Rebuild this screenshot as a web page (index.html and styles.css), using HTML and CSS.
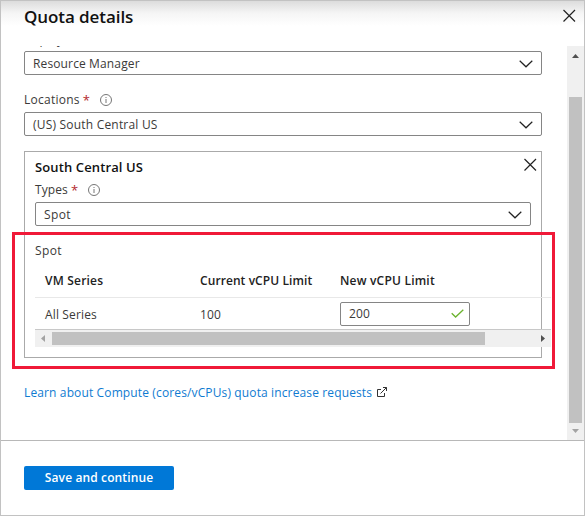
FILE: index.html
```html
<!DOCTYPE html>
<html lang="en">
<head>
<meta charset="utf-8">
<title>Quota details</title>
<link rel="stylesheet" href="styles.css">
</head>
<body>
<div class="panel">
  <header class="header">
    <h1 class="title">Quota details</h1>
    <svg class="close" width="13" height="13" viewBox="0 0 13 13"><path d="M.5 1L12 12.500M12 1L.5 12.500"/></svg>
  </header>
  <div class="body">
    <main class="content">
      <div class="label label-cut">Deployment model</div>
      <div class="select"><span class="t-resource">Resource Manager</span><svg class="chevron" width="14" height="8" viewBox="0 0 14 8"><path d="M.7.7L7 6.800 13.300.7"/></svg></div>
      <div class="label label-loc"><span class="t-loc">Locations</span><span class="req">*</span><svg class="info" width="12" height="12" viewBox="0 0 12 12"><circle cx="6" cy="6" r="5.500"/><path d="M6 5v4M6 3v1"/></svg></div>
      <div class="select"><span class="t-us">(US) South Central US</span><svg class="chevron" width="14" height="8" viewBox="0 0 14 8"><path d="M.7.7L7 6.800 13.300.7"/></svg></div>
      <section class="card">
        <div class="card-head"><h2 class="card-title">South Central US</h2><svg class="close" width="13" height="13" viewBox="0 0 13 13"><path d="M.5 1L12 12.500M12 1L.5 12.500"/></svg></div>
        <div class="label label-types"><span class="t-types">Types</span><span class="req">*</span><svg class="info" width="12" height="12" viewBox="0 0 12 12"><circle cx="6" cy="6" r="5.500"/><path d="M6 5v4M6 3v1"/></svg></div>
        <div class="select select-card"><span class="t-spot">Spot</span><svg class="chevron" width="14" height="8" viewBox="0 0 14 8"><path d="M.7.7L7 6.800 13.300.7"/></svg></div>
        <div class="spot-label"><span class="t-spot">Spot</span></div>
        <div class="table">
          <div class="row row-head"><span class="t-vm">VM Series</span><span class="t-cur">Current vCPU Limit</span><span class="t-new">New vCPU Limit</span></div>
          <div class="row row-data"><span class="t-all">All Series</span><span class="t-num">100</span>
            <div class="input"><span class="t-num">200</span><svg class="check" width="13" height="9" viewBox="0 0 13 9"><path d="M.7 4.300L4.600 8 12.300.7"/></svg></div>
          </div>
          <div class="hscroll"><svg width="17" height="17" viewBox="0 0 17 17"><path fill="#a3a3a3" d="M10 5v7L6 8.500z"/></svg><div class="hthumb"></div><svg width="17" height="17" viewBox="0 0 17 17"><path fill="#505050" d="M7 5v7l4-3.500z"/></svg></div>
        </div>
      </section>
      <a class="link"><span class="t-link">Learn about Compute (cores/vCPUs) quota increase requests</span><svg class="ext" width="10" height="10" viewBox="0 0 10 10"><path d="M4 2.500H.5v7h7V6M3.500 6.500l6-6M6 .5h3.500V4"/></svg></a>
    </main>
    <div class="vscroll"><svg width="17" height="17" viewBox="0 0 17 17"><path fill="#505050" d="M5 11h7L8.500 7z"/></svg><div class="vthumb"></div><svg width="17" height="17" viewBox="0 0 17 17"><path fill="#a3a3a3" d="M5 6h7l-3.500 4z"/></svg></div>
  </div>
  <footer class="footer"><button class="save">Save and continue</button></footer>
  <div class="highlight"></div>
</div>
</body>
</html>
```
FILE: styles.css
```css
* { box-sizing: border-box; }
body { margin: 0; background: #fff; }
.panel {
  position: relative; width: 585px; height: 516px; overflow: hidden;
  display: flex; flex-direction: column; border: 1px solid #c2c2c2;
  font: 12px/18px "Open Sans", "Noto Sans", sans-serif; color: #3b3a39;
  white-space: nowrap;
}
svg { display: block; flex: none; }
.header {
  height: 45px; flex: none; display: flex; justify-content: space-between;
  padding: 0 8px 0 23px; background: linear-gradient(#dcdcdc, #f5f5f5 12px, #fff 25px);
}
.title { margin: 3px 0 0; font-size: 17px; line-height: 26px; font-weight: 600; letter-spacing: -.08px; color: #111; }
.close { fill: none; stroke: #222; stroke-width: 1.2; }
.header .close { margin-top: 8px; }
.body { height: 394px; flex: none; display: flex; overflow: hidden; }
.content { flex: 1; min-width: 0; padding: 0 25px 0 23px; }
.label { display: flex; align-items: center; height: 18px; }
.label-cut { margin-top: -15px; margin-bottom: 2px; }
.select {
  height: 24px; display: flex; align-items: center; justify-content: space-between;
  border: 1px solid #858585; border-radius: 2px; padding: 1px 8px 0; background: #fff;
}
.chevron { fill: none; stroke: #222; stroke-width: 1.2; }
.label-loc { margin: 16px 0 3px; }
.req { color: #b4282d; margin-left: 3px; font-size: 13px; }
.info { margin-left: 10px; fill: none; stroke: #666; stroke-width: .9; }
.t-resource { letter-spacing: .13px; }
.t-loc { letter-spacing: .25px; }
.t-us { letter-spacing: .2px; }
.t-types { letter-spacing: .1px; }
.t-spot { letter-spacing: .4px; }
.t-vm, .t-new { letter-spacing: .2px; }
.t-cur { letter-spacing: .08px; }
.t-all { letter-spacing: .15px; }
.t-num { letter-spacing: .2px; }
.t-link { letter-spacing: .13px; }
.t-loc, .t-types, .spot-label { font-weight: 500; }
.card { margin-top: 15px; height: 207px; border: 1px solid #aaa; padding: 0 10px; }
.card-head { display: flex; justify-content: space-between; height: 29px; margin-right: -6px; }
.card-title { margin: 6px 0 0; font-size: 13px; line-height: 18px; font-weight: 600; letter-spacing: .12px; color: #111; }
.card-head .close { margin-top: 6px; }
.label-types { margin-bottom: 3px; }
.spot-label { margin-top: 16px; height: 18px; }
.table { width: 516px; position: relative; margin-top: 4px; }
.row { display: grid; grid-template-columns: 155px 140px 1fr; align-items: center; padding-left: 10px; }
.row-head { height: 34px; font-weight: 600; color: #222; border-bottom: 1px solid #e8e8e8; }
.row-data { height: 32px; border-bottom: 1px solid #c8c8c8; }
.row-data > span { padding-top: 2px; }
.input {
  width: 130px; height: 24px; border: 1px solid #858585; border-radius: 2px; background: #fff;
  padding: 0 5px 0 8px; display: flex; align-items: center; justify-content: space-between;
}
.check { fill: none; stroke: #6bb32e; stroke-width: 1.3; }
.hscroll { height: 17px; display: flex; align-items: center; justify-content: space-between; background: #f0f0f0; }
.hthumb { width: 433px; height: 13px; background: #c1c1c1; margin-right: auto; }
.link { display: flex; align-items: center; height: 18px; margin-top: 26px; color: #0f7bd1; }
.ext { margin-left: 5px; margin-top: -2px; fill: none; stroke: #333; stroke-width: 1; }
.vscroll {
  width: 17px; flex: none; background: #f0f0f0; padding-top: 1px;
  display: flex; flex-direction: column; align-items: center;
}
.vthumb { width: 13px; height: 326px; margin: auto 0 0; background: #c1c1c1; }
.footer { flex: 1; border-top: 1px solid #b8b8b8; padding: 25px 23px; }
.save {
  display: block; width: 150px; height: 24px; padding: 0; border: 0; border-radius: 2px;
  background: #0078d7; color: #fff; font: 600 12px/24px "Open Sans", sans-serif; letter-spacing: .12px;
}
.highlight { position: absolute; left: 11px; top: 231px; width: 543px; height: 137px; border: 3px solid #f01938; }
```
